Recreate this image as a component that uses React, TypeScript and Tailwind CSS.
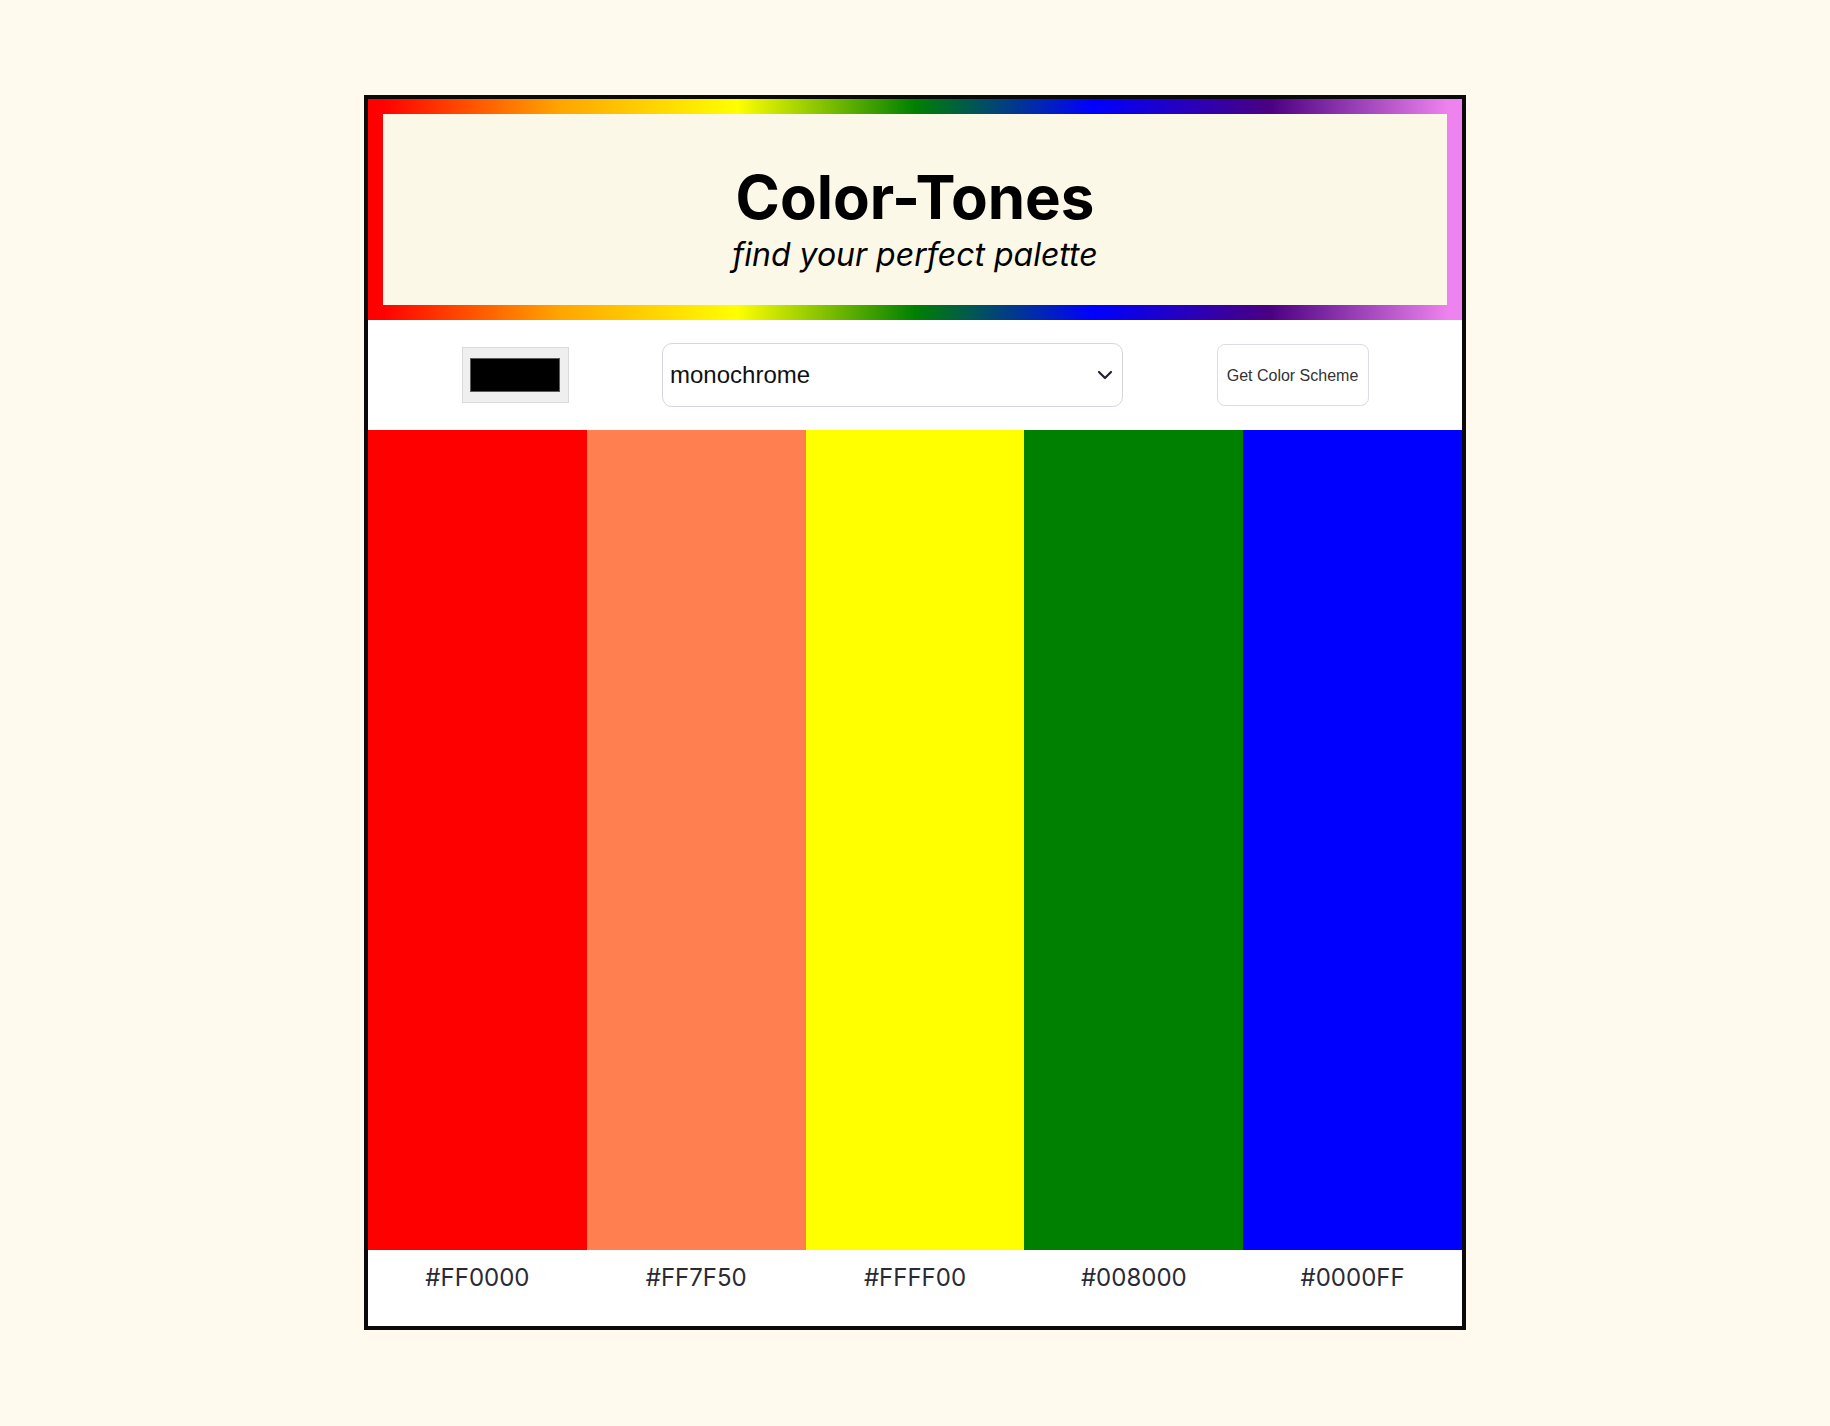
import React from "react";

const colors = ["#FF0000", "#FF7F50", "#FFFF00", "#008000", "#0000FF"];

export default function App() {
  return (
    <div className="min-h-screen w-full bg-[#fffaed] flex justify-center pt-[95px] pb-[97px] font-['Inter',sans-serif]">
      <div className="w-[1102px] border-[4px] border-[#0a0a0a] bg-white flex flex-col">
        {/* Header */}
        <div className="h-[221px] border-[15px] [border-image:linear-gradient(to_right,red,orange,yellow,green,blue,indigo,violet)_1] bg-[#fcf8e7] flex flex-col items-center pt-[53px]">
          <h1 className="text-[60px] leading-[60px] font-bold text-black font-['Inter',sans-serif]">
            Color-Tones
          </h1>
          <p className="mt-[10px] text-[32px] leading-[36px] italic text-black font-['Inter',sans-serif]">
            find your perfect palette
          </p>
        </div>

        {/* Controls */}
        <div className="h-[110px] flex items-center justify-evenly bg-white">
          <div className="w-[107px] h-[56px] bg-[#efefef] border border-[#dadada] flex items-center justify-center">
            <div className="w-[90px] h-[34px] bg-black border border-[#5c5c5c]" />
          </div>
          <div className="w-[461px] h-[64px] rounded-[10px] border border-[#d6d6de] bg-white flex items-center justify-between pl-[7px] pr-[9px]">
            <span className="text-[24px] text-[#111] font-['Liberation_Sans',Arial,sans-serif]">monochrome</span>
            <svg width="16" height="10" viewBox="0 0 16 10" fill="none">
              <path d="M2 2 L8 8 L14 2" stroke="#1f2430" strokeWidth="2.2" strokeLinecap="round" strokeLinejoin="round" />
            </svg>
          </div>
          <button className="w-[152px] h-[62px] rounded-[8px] border border-[#dcdce2] bg-white pt-[2px] text-[16px] text-[#333] font-['Liberation_Sans',Arial,sans-serif]">
            Get Color Scheme
          </button>
        </div>

        {/* Stripes */}
        <div className="grid grid-cols-5 h-[820px]">
          {colors.map((c) => (
            <div key={c} style={{ backgroundColor: c }} />
          ))}
        </div>

        {/* Labels */}
        <div className="grid grid-cols-5 h-[76px] pt-[11px]">
          {colors.map((c) => (
            <div key={c} className="text-center text-[24px] leading-[34px] text-[#2a2a36] font-['Inter',sans-serif]">
              {c}
            </div>
          ))}
        </div>
      </div>
    </div>
  );
}
